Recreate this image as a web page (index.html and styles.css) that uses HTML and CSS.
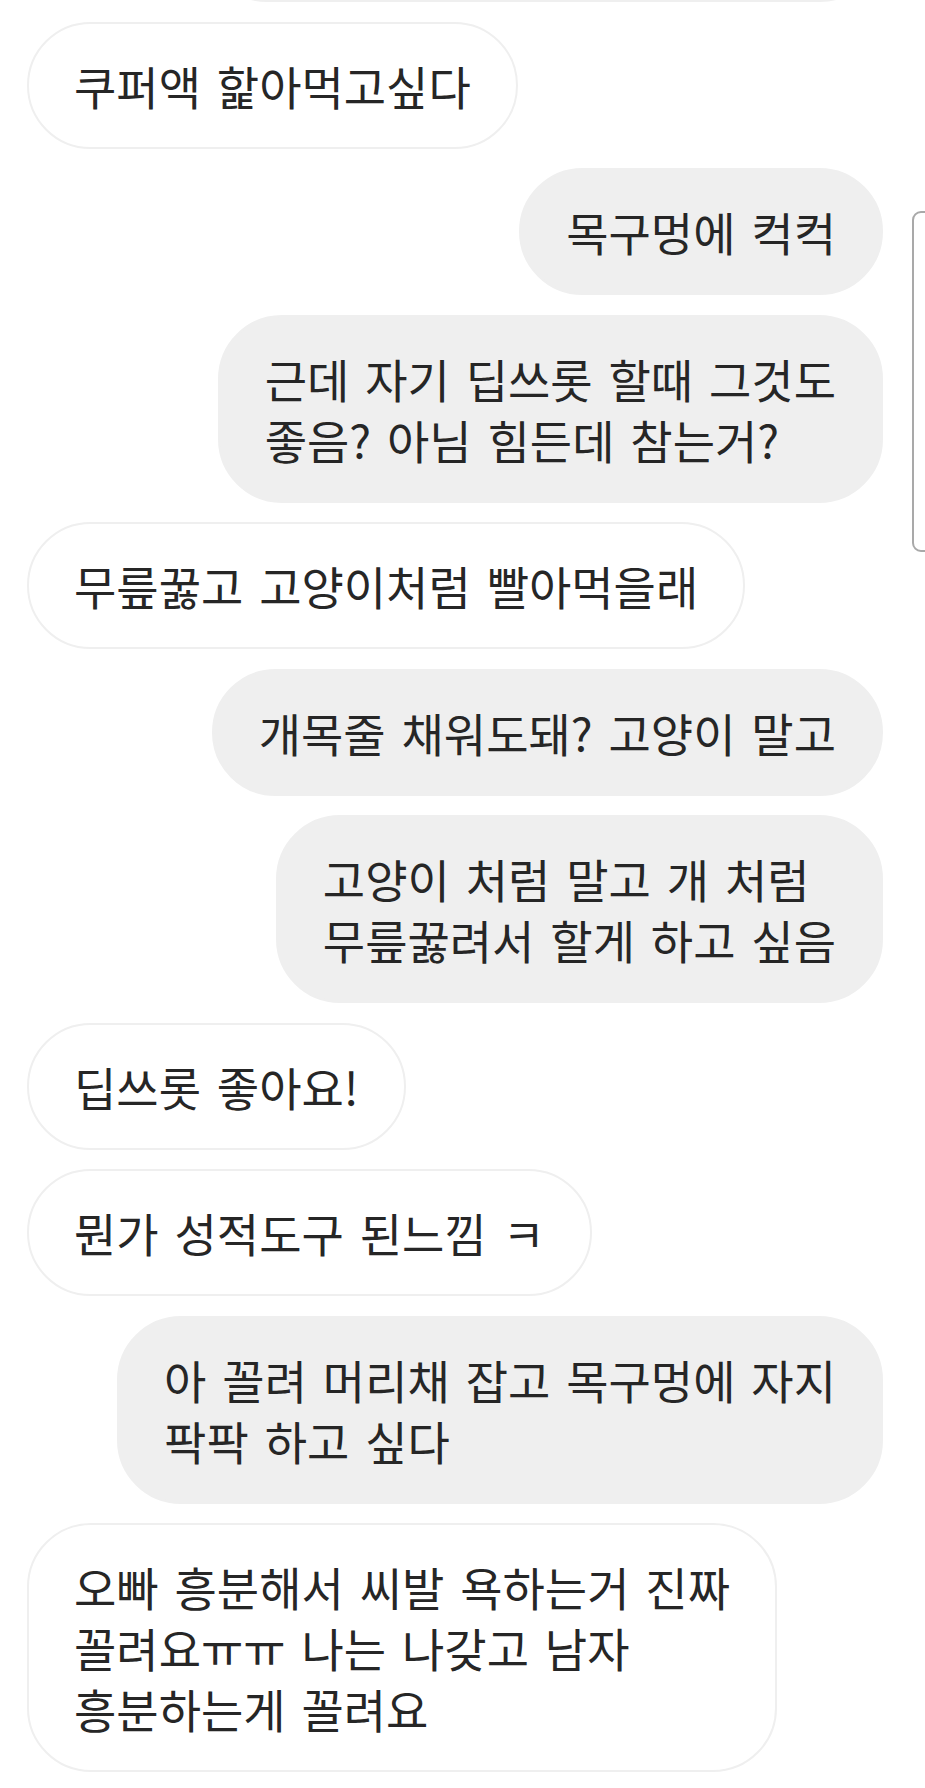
FILE: index.html
```html
<!DOCTYPE html>
<html lang="ko">
  <head>
    <meta charset="UTF-8" />
    <meta name="viewport" content="width=device-width, initial-scale=1.0" />
    <title>Direct</title>
    <link rel="stylesheet" href="styles.css">
  </head>
  <body>
    <main class="thread">
      <div class="bubble sent peek"></div>
      <div class="bubble received">쿠퍼액 핥아먹고싶다</div>
      <div class="bubble sent">목구멍에 컥컥</div>
      <div class="bubble sent">근데 자기 딥쓰롯 할때 그것도<br>좋음? 아님 힘든데 참는거?</div>
      <div class="bubble received">무릎꿇고 고양이처럼 빨아먹을래</div>
      <div class="bubble sent">개목줄 채워도돼? 고양이 말고</div>
      <div class="bubble sent">고양이 처럼 말고 개 처럼<br>무릎꿇려서 할게 하고 싶음</div>
      <div class="bubble received">딥쓰롯 좋아요!</div>
      <div class="bubble received">뭔가 성적도구 된느낌 ㅋ</div>
      <div class="bubble sent">아 꼴려 머리채 잡고 목구멍에 자지<br>팍팍 하고 싶다</div>
      <div class="bubble received">오빠 흥분해서 씨발 욕하는거 진짜<br>꼴려요ㅠㅠ 나는 나갖고 남자<br>흥분하는게 꼴려요</div>
    </main>
    <div class="side-panel"></div>
  </body>
</html>
```

FILE: styles.css
```css
html {
  height: 100%;
}

body {
  margin: 0;
  height: 100%;
  overflow: hidden;
  background-color: #ffffff;
  font-family: "Noto Sans CJK KR", Roboto, sans-serif;
  color: #262626;
}

.thread {
  display: flex;
  flex-direction: column;
  gap: 19.5px;
  padding: 0 42px 0 27px;
}

.bubble {
  padding: 31px 45px;
  font-size: 46px;
  line-height: 61px;
  word-spacing: 3px;
  border: 2.5px solid #efefef;
  border-radius: 64px;
  white-space: nowrap;
}

.received {
  align-self: flex-start;
  background-color: #ffffff;
}

.sent {
  align-self: flex-end;
  background-color: #efefef;
}

.peek {
  width: 585px;
  height: 60px;
  margin-top: -124px;
}

.side-panel {
  position: absolute;
  top: 211px;
  left: 912px;
  width: 40px;
  height: 337px;
  border: 2px solid #a9a9a9;
  border-radius: 9px;
}
```
